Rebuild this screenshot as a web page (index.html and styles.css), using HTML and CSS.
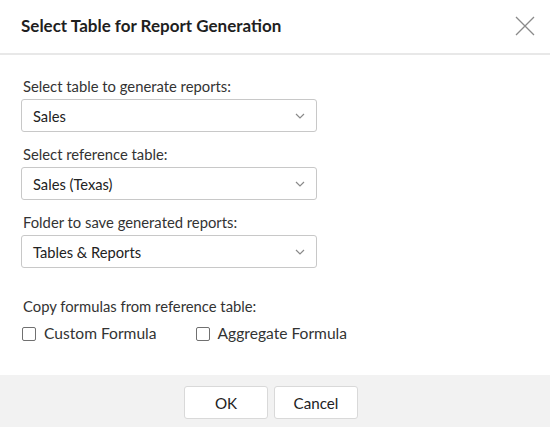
FILE: index.html
```html
<!DOCTYPE html>
<html>
<head>
<meta charset="utf-8">
<link rel="stylesheet" href="styles.css">
</head>
<body>
<div class="dialog">
  <div class="header">
    <div class="title">Select Table for Report Generation</div>
    <svg class="close" width="20" height="20" viewBox="0 0 20 20"><path d="M1 1 L19 19 M19 1 L1 19" stroke="#8a8a8a" stroke-width="1.3" fill="none"/></svg>
  </div>
  <div class="content">
    <div class="field">
      <div class="label">Select table to generate reports:</div>
      <div class="select"><span>Sales</span><svg class="chev" width="10" height="6" viewBox="0 0 10 6"><path d="M1 1 L5 5 L9 1" stroke="#8a8a8a" stroke-width="1.2" fill="none"/></svg></div>
    </div>
    <div class="field">
      <div class="label">Select reference table:</div>
      <div class="select"><span>Sales (Texas)</span><svg class="chev" width="10" height="6" viewBox="0 0 10 6"><path d="M1 1 L5 5 L9 1" stroke="#8a8a8a" stroke-width="1.2" fill="none"/></svg></div>
    </div>
    <div class="field">
      <div class="label">Folder to save generated reports:</div>
      <div class="select"><span>Tables &amp; Reports</span><svg class="chev" width="10" height="6" viewBox="0 0 10 6"><path d="M1 1 L5 5 L9 1" stroke="#8a8a8a" stroke-width="1.2" fill="none"/></svg></div>
    </div>
    <div class="copy">
      <div class="label">Copy formulas from reference table:</div>
      <div class="checks">
        <label class="check"><span class="box"></span>Custom Formula</label>
        <label class="check"><span class="box"></span>Aggregate Formula</label>
      </div>
    </div>
  </div>
  <div class="footer">
    <button class="btn">OK</button>
    <button class="btn">Cancel</button>
  </div>
</div>
</body>
</html>
```
FILE: styles.css
```css
html, body {
  margin: 0;
  padding: 0;
  background: #ffffff;
}
body {
  font-family: Lato, "Open Sans", sans-serif;
  color: #333333;
}
.dialog {
  width: 550px;
  height: 427px;
  display: flex;
  flex-direction: column;
}
.header {
  border-bottom: 2px solid #e8e8e8;
  display: flex;
  align-items: center;
  justify-content: space-between;
  padding: 0 15px 0 21px;
  box-sizing: border-box;
  height: 55px;
}
.title {
  font-size: 17px;
  font-weight: 700;
  color: #1f1f1f;
  margin-top: -2px;
}
.close {
  margin-top: -2px;
}
.content {
  flex: 1;
  padding: 22px 0 0 21px;
}
.field {
  margin-bottom: 13px;
}
.label {
  font-size: 14.8px;
  line-height: 18px;
  padding-left: 2px;
  margin-bottom: 4px;
  color: #333;
}
.select {
  width: 296px;
  height: 33px;
  box-sizing: border-box;
  border: 1px solid #c8c8c8;
  border-radius: 3px;
  display: flex;
  align-items: center;
  justify-content: space-between;
  padding: 0 11px 0 11px;
  font-size: 14.7px;
  color: #222;
}
.copy {
  margin-top: 29px;
}
.checks {
  display: flex;
  margin-top: 9px;
}
.check {
  display: flex;
  align-items: center;
  font-size: 15.6px;
  color: #333;
  margin-right: 38px;
}
.box {
  width: 12px;
  height: 12px;
  border: 1px solid #707070;
  border-radius: 2px;
  margin: 1px 8px 0 1px;
  display: inline-block;
}
.footer {
  height: 52px;
  background: #f2f2f2;
  display: flex;
  justify-content: center;
  align-items: flex-start;
  gap: 6px;
  padding-top: 11px;
  box-sizing: border-box;
  padding-right: 8px;
}
.btn {
  width: 84px;
  height: 33px;
  background: #ffffff;
  border: 1px solid #d9d9d9;
  border-radius: 3px;
  font-family: Lato, "Open Sans", sans-serif;
  font-size: 15.2px;
  color: #222;
  padding: 0;
}
```
